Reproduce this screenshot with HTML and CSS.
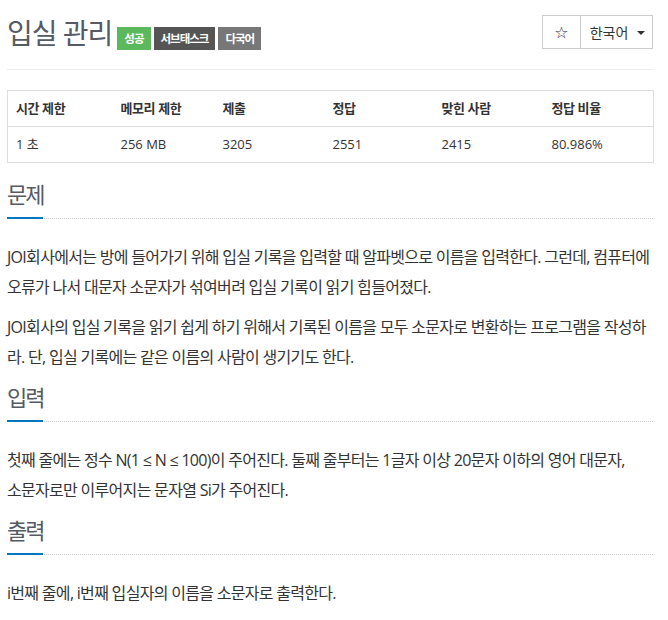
FILE: index.html
```html
<!DOCTYPE html>
<html lang="ko">
<head>
<meta charset="utf-8">
<title>입실 관리</title>
<link rel="stylesheet" href="styles.css">
</head>
<body>
<div class="page">
  <div class="page-header">
    <div class="title-wrap">
      <h1 class="title">입실 관리</h1>
      <div class="labels">
        <span class="label label-success">성공</span>
        <span class="label label-dark">서브태스크</span>
        <span class="label label-gray">다국어</span>
      </div>
    </div>
    <div class="btn-group">
      <span class="btn btn-star">☆</span>
      <span class="btn btn-lang">한국어 <span class="caret"></span></span>
    </div>
  </div>

  <table class="info-table">
    <colgroup>
      <col class="c1"><col class="c2"><col class="c3"><col class="c4"><col class="c5"><col class="c6">
    </colgroup>
    <thead>
      <tr><th>시간 제한</th><th>메모리 제한</th><th>제출</th><th>정답</th><th>맞힌 사람</th><th>정답 비율</th></tr>
    </thead>
    <tbody>
      <tr><td>1 초</td><td>256 MB</td><td>3205</td><td>2551</td><td>2415</td><td>80.986%</td></tr>
    </tbody>
  </table>

  <section class="section">
    <div class="headline"><h2>문제</h2></div>
    <p>JOI회사에서는 방에 들어가기 위해 입실 기록을 입력할 때 알파벳으로 이름을 입력한다. 그런데, 컴퓨터에 오류가 나서 대문자 소문자가 섞여버려 입실 기록이 읽기 힘들어졌다.</p>
    <p>JOI회사의 입실 기록을 읽기 쉽게 하기 위해서 기록된 이름을 모두 소문자로 변환하는 프로그램을 작성하라. 단, 입실 기록에는 같은 이름의 사람이 생기기도 한다.</p>
  </section>

  <section class="section">
    <div class="headline"><h2>입력</h2></div>
    <p>첫째 줄에는 정수 N(1 ≤ N ≤ 100)이 주어진다. 둘째 줄부터는 1글자 이상 20문자 이하의 영어 대문자,<br>소문자로만 이루어지는 문자열 Si가 주어진다.</p>
  </section>

  <section class="section">
    <div class="headline"><h2>출력</h2></div>
    <p>i번째 줄에, i번째 입실자의 이름을 소문자로 출력한다.</p>
  </section>
</div>
</body>
</html>
```

FILE: styles.css
```css
* { box-sizing: border-box; }
html, body { margin: 0; padding: 0; background: #fff; }
body {
  font-family: "Open Sans", "Noto Sans CJK KR", sans-serif;
  color: #333;
}
.page {
  width: 668px;
  padding: 0 15px 0 7px;
}
.page-header {
  display: flex;
  justify-content: space-between;
  align-items: flex-start;
  border-bottom: 1px solid #eee;
  height: 70px;
  padding-top: 15px;
}
.title-wrap {
  display: flex;
  align-items: flex-start;
}
.title {
  margin: 0;
  padding-top: 1px;
  font-size: 28px;
  line-height: 34px;
  font-weight: 400;
  color: #555a63;
  letter-spacing: -1px;
}
.labels {
  display: flex;
  gap: 3px;
  margin-left: 5px;
  margin-top: 12px;
}
.label {
  display: inline-block;
  height: 23px;
  line-height: 23px;
  padding: 0 7px;
  font-size: 11.5px;
  font-weight: 700;
  color: #fff;
  letter-spacing: -1px;
}
.label-success { background: #5cb85c; }
.label-dark { background: #555; }
.label-gray { background: #777; }

.btn-group {
  display: flex;
  border: 1px solid #ccc;
  height: 34px;
}
.btn {
  display: flex;
  align-items: center;
  justify-content: center;
  height: 32px;
  font-size: 14px;
  color: #333;
}
.btn-star {
  width: 38px;
  border-right: 1px solid #ccc;
  font-size: 16px;
  font-family: "DejaVu Sans", sans-serif;
}
.btn-lang {
  width: 71px;
  gap: 9px;
  padding-left: 2px;
}
.caret {
  width: 0;
  height: 0;
  border-left: 4px solid transparent;
  border-right: 4px solid transparent;
  border-top: 4px solid #333;
  margin-top: 2px;
}

.info-table {
  width: 646px;
  margin-top: 20px;
  margin-bottom: 16px;
  border-collapse: collapse;
  border: 1px solid #ddd;
  table-layout: fixed;
  font-size: 13px;
}
.c1 { width: 105px; }
.c2 { width: 102px; }
.c3 { width: 110px; }
.c4 { width: 109px; }
.c5 { width: 110px; }
.c6 { width: 110px; }
.info-table th, .info-table td {
  text-align: left;
  padding: 8px 8px;
  height: 36px;
  line-height: 19px;
  vertical-align: middle;
}
.info-table th {
  font-weight: 700;
  border-bottom: 1px solid #ddd;
  letter-spacing: -0.4px;
}

.section { margin-bottom: 10px; }
.headline {
  border-bottom: 1px dotted #ccc;
  margin-bottom: 23px;
}
.headline h2 {
  display: inline-block;
  margin: 0 0 -1px 0;
  padding-bottom: 8px;
  font-size: 22px;
  line-height: 30px;
  font-weight: 400;
  color: #555a63;
  letter-spacing: -2px;
  border-bottom: 2px solid #0076c0;
}
.section p {
  margin: 0 -6px 10px 0;
  font-size: 16px;
  line-height: 30px;
  letter-spacing: -0.7px;
}
```
